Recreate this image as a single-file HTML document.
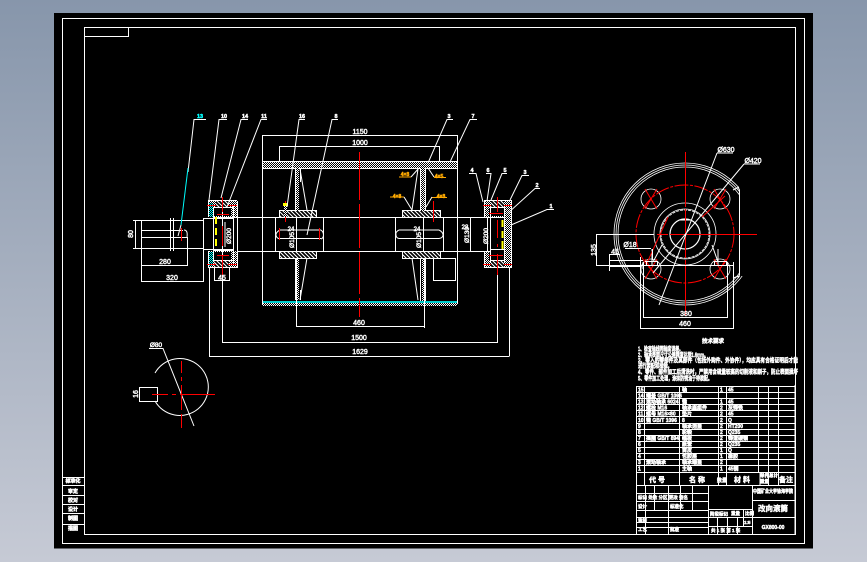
<!DOCTYPE html>
<html><head><meta charset="utf-8">
<style>
html,body{margin:0;padding:0;width:867px;height:562px;overflow:hidden;background:linear-gradient(#8796ab,#c6cad5)}
svg{position:absolute;left:0;top:0}
text{font-family:"Liberation Sans","Noto Sans CJK SC",sans-serif;fill:#fff;stroke:#fff;stroke-width:.45}
.l{fill:none;stroke:#fff;stroke-width:1}
.t{fill:none;stroke:#fff;stroke-width:.8}
.r{fill:none;stroke:#f00;stroke-width:1}
.c{fill:none;stroke:#0ff;stroke-width:1}
.y{fill:none;stroke:#ff0;stroke-width:2}
.o text{fill:#fa0;stroke:#fa0}
</style></head><body>
<svg width="867" height="562" viewBox="0 0 867 562">
<defs>
<pattern id="dots" width="2" height="2" patternUnits="userSpaceOnUse"><rect width="2" height="2" fill="#000"/><rect width="1" height="1" fill="#fff"/><rect x="1" y="1" width="1" height="1" fill="#fff"/></pattern>
<pattern id="hatch" width="4" height="4" patternUnits="userSpaceOnUse"><rect width="4" height="4" fill="#000"/><path d="M0 0L4 4M-1 3L1 5M3 -1L5 1" stroke="#fff" stroke-width="1.1"/></pattern>
<pattern id="cy" width="2" height="2" patternUnits="userSpaceOnUse"><rect width="2" height="2" fill="#000"/><rect width="1" height="1" fill="#0ff"/><rect x="1" y="1" width="1" height="1" fill="#0ff"/></pattern>
</defs>
<rect x="54" y="13" width="759" height="535.500" fill="#000"/>
<g shape-rendering="crispEdges">
<rect class="l" x="62.500" y="18.500" width="742" height="525"/>
<rect class="l" x="84.500" y="27.500" width="711" height="507"/>
<path class="l" d="M84 36.500H128.500V27"/>
<path class="l" d="M62 477.500H84M62 485.500H84M62 495.500H84M62 504.500H84M62 513.500H84M62 524.500H84"/>
</g>
<g font-size="5" font-weight="700" text-anchor="middle"><text x="73" y="482.500">标准化</text><text x="73" y="493">审定</text><text x="73" y="502">校对</text><text x="73" y="511">设计</text><text x="73" y="520">制图</text><text x="73" y="530">描图</text></g>

<!-- ===== main view ===== -->
<g shape-rendering="crispEdges">
<rect x="262" y="162" width="195" height="6" fill="url(#dots)"/>
<path class="l" d="M262 161.500H457M262 168.500H457"/>
<rect x="262" y="301" width="195" height="2" fill="#0cc"/>
<rect x="262" y="303" width="195" height="3" fill="url(#dots)"/>
<path class="l" d="M262.500 135V304M457.500 135V304M262 135.500H457M279.500 146V161M439.500 146V161M279 146.500H439"/>
<path class="l" d="M233 217.500H490M233 251.500H490M275.500 217V251M323.500 217V251M296.500 217V251M395.500 217V251M443.500 217V251M423.500 217V251M470.500 217V251"/>
<rect x="279" y="210" width="38" height="7" fill="url(#hatch)"/>
<rect x="279" y="252" width="38" height="7" fill="url(#hatch)"/>
<rect x="402" y="211" width="39" height="6" fill="url(#hatch)"/>
<rect x="402" y="252" width="39" height="7" fill="url(#hatch)"/>
<path class="l" d="M279.500 210V217M316.500 210V217M279 210.500H317M279.500 251V259M316.500 251V259M279 258.500H317M402.500 211V217M440.500 211V217M402 210.500H441M402.500 251V258M440.500 251V258M402 258.500H441"/>
<rect x="296" y="168" width="3" height="43" fill="url(#dots)"/>
<rect x="296" y="259" width="3" height="41" fill="url(#dots)"/>
<rect x="421" y="168" width="4" height="43" fill="url(#dots)"/>
<rect x="422" y="259" width="3" height="42" fill="url(#dots)"/>
<path class="l" d="M295.500 168V211M300.500 168V182M295.500 258V300M300.500 290V300M420.500 168V211M425.500 168V211M420.500 258V301M425.500 258V301"/>
<rect class="l" x="433.500" y="258.500" width="22" height="22"/>
<path class="l" d="M203.500 218.500H233M203.500 249.500H233M203.500 218V249M133 220.500H203M133 248.500H203M141.500 220V282M135.500 220V248M170.500 218V251M173.500 218V251M141 230.500H183M141 237.500H187M187.500 237V265M142 265.500H188M142 281.500H204M203.500 249V281"/>
<path class="l" d="M296.500 259V326.500H424M424.500 259V328M222 342.500H497.500M222.500 268V342.500M497.500 268V343M209 356.500H509.500M209.500 268V356M509.500 268V356"/>
<path class="l" d="M214.500 268V280M229.500 268V280M214 280.500H230"/>
</g>
<path class="l" d="M184 230Q188 230 187 237"/>
<path class="l" d="M280 230Q276 232 276 235Q276 238 280 239M279 230H321M279 238.500H321M321 230Q323.500 232 323.500 235Q323.500 238 321 239"/>
<path class="l" d="M399 230Q395 232 396 235Q396 238 399 238.500M399 230H439M399 238.500H439M439 230Q443 232 443 235Q443 238 439 238.500"/>
<path class="l" d="M300 169L307 210M307 258L300 300M418 169L412 210M412 258L418 300"/>
<g shape-rendering="crispEdges">
<rect x="209" y="201" width="28" height="16" fill="url(#dots)"/>
<rect x="209" y="251" width="28" height="17" fill="url(#dots)"/>
<rect x="216" y="201" width="13" height="6" fill="url(#hatch)"/>
<rect x="214" y="261" width="15" height="6" fill="url(#hatch)"/>
<rect x="209" y="203" width="4" height="14" fill="url(#cy)"/>
<rect x="209" y="252" width="4" height="14" fill="url(#cy)"/>
<rect x="213" y="208" width="18" height="8" fill="#000"/>
<rect x="213" y="252" width="18" height="8" fill="#000"/>
<path class="l" d="M208.500 201V217M208.500 251V268M233.500 205V264M237.500 201V268M208 200.500H237M208 267.500H237M213.500 207V262M222.500 207V262M213 217.500H234M213 250.500H234M225 222V247M213 207.500H234M213 260.500H234"/>
<path class="y" d="M216 217V224M216 228V235M216 239V246"/>
<path class="r" d="M222.500 197V212M222.500 226V246M222.500 255V275M207 205.500H216M228 205.500H237M207 264.500H216M228 264.500H237M217 214.500H229M217 255.500H229"/>
<rect x="484" y="201" width="28" height="16" fill="url(#dots)"/>
<rect x="484" y="252" width="28" height="16" fill="url(#dots)"/>
<rect x="491" y="201" width="13" height="6" fill="url(#hatch)"/>
<rect x="491" y="261" width="13" height="6" fill="url(#hatch)"/>
<rect x="489" y="208" width="16" height="8" fill="#000"/>
<rect x="489" y="252" width="16" height="8" fill="#000"/>
<rect x="504" y="217" width="8" height="35" fill="url(#dots)"/>
<path class="l" d="M484.500 201V217M484.500 252V268M511.500 201V268M484 200.500H512M484 267.500H512M490.500 207V262M504.500 207V262M490 207.500H505M490 260.500H505M490 217.500H504M490 249.500H504M487.500 217V252"/>
<path class="y" d="M502.500 220V227M502.500 231V238M502.500 241V249"/>
<path class="r" d="M497.500 197V212M497.500 220V238M497.500 244V247M497.500 254V275M483 205.500H491M504 205.500H512M483 264.500H491M504 264.500H512M489 213.500H503M489 255.500H503"/>
<path class="r" d="M359.500 152V200M359.500 204V248M359.500 252V294M359.500 298V317M285.500 201V222M433.500 201V222M279.500 228V240M319.500 228V240M181.500 228V241"/>
<rect x="283" y="203" width="5" height="3" fill="#ff0"/>
<rect x="284" y="206" width="3" height="11" fill="url(#dots)"/>
</g>
<!-- leaders -->
<path class="l" d="M206 119.500H194L188 172M227 119.500H219L209 200M248 119.500H241L221 198M267 119.500H261L227 207M305 119.500H299L287 207M338 119.500H332L307 235"/>
<path class="c" d="M188 168L181 225"/>
<path class="l" d="M181 225L178 236"/>
<path class="l" d="M453 119.500H447L428 163M477 119.500H470L450 162M469 173.500H476L483 202M486 173.500H491L487 201M507 173.500H502L491 200M529 175.500H522L510 200M540 188.500H535L508 213M554 209.500H547L511 225"/>
<g font-size="5.500" font-weight="700" text-anchor="middle">
<text x="200" y="118" style="fill:#0ff;stroke:#0ff">13</text><text x="224" y="118">10</text><text x="245" y="118">14</text><text x="264" y="118">11</text><text x="302" y="118">16</text><text x="336" y="118">8</text>
<text x="449" y="118">3</text><text x="473" y="118">7</text><text x="472" y="172">4</text><text x="488" y="172">6</text><text x="505" y="172">5</text><text x="525" y="174">3</text><text x="537" y="187">2</text><text x="551" y="208">1</text>
</g>
<g font-size="7" text-anchor="middle">
<text x="360" y="134">1150</text><text x="360" y="145">1000</text><text x="359" y="325">460</text><text x="359" y="340">1500</text><text x="360" y="354">1629</text>
<text x="165" y="264">280</text><text x="172" y="280">320</text><text x="222" y="280">45</text>
<text transform="translate(133,234) rotate(-90)">80</text>
</g>
<g font-size="6.500" text-anchor="middle">
<text transform="translate(294,240) rotate(-90)">Ø105</text>
<text transform="translate(421,240) rotate(-90)">Ø105</text>
<text transform="translate(231,236) rotate(-90)">Ø200</text>
<text transform="translate(488,236) rotate(-90)">Ø200</text>
<text transform="translate(469,235) rotate(-90)">Ø130</text>
<text x="291" y="231" font-size="6">24</text><text x="417" y="231" font-size="6">24</text><text x="465" y="229" font-size="6">28</text>
</g>
<g font-size="5" font-weight="700" class="o" text-anchor="middle">
<text x="405" y="176">4×8</text><text x="439" y="178">4×5</text><text x="397" y="198">4×8</text><text x="441" y="198">4×8</text>
</g>
<path d="M399 177H411M434 177.500H446M390 197H404M432 197.500H447" stroke="#fa0" fill="none"/>
<path class="l" d="M411 177L419 168M434 177L428 168M404 197L412 210M432 197L426 207"/>

<!-- ===== shaft section ===== -->
<path class="l" d="M155 373A28.500 28.500 0 1 1 155 401"/>
<path class="l" d="M139 387.500H157.500V401.500H139M139.500 387V402" shape-rendering="crispEdges"/>
<path class="l" d="M149 348.500H163L194 426"/>
<path class="r" d="M152 394.500H168M172 394.500H176M180 394.500H215M181.500 361V373M181.500 377V381M181.500 385V410M181.500 414V428" shape-rendering="crispEdges"/>
<text x="156" y="347" font-size="6.500" text-anchor="middle">Ø80</text>
<text transform="translate(138,394) rotate(-90)" font-size="7" text-anchor="middle">16</text>

<!-- ===== side view ===== -->
<g>
<clipPath id="cut"><path d="M600 150H739V276H760V320H600Z"/></clipPath>
<g clip-path="url(#cut)">
<circle class="t" cx="685" cy="234" r="71"/><circle class="t" cx="685" cy="234" r="69"/><circle class="t" cx="685" cy="234" r="67"/>
</g>
<path class="l" d="M738 187L739.500 190V275L738 278M733 190L739 187M733 278L739 276"/>
<circle class="t" cx="651" cy="199" r="10"/><circle class="t" cx="720" cy="199" r="10"/><circle class="t" cx="651" cy="269" r="10"/><circle class="t" cx="720" cy="269" r="10"/>
<circle class="t" cx="685" cy="234" r="31"/><circle class="t" cx="685" cy="234" r="24" stroke-dasharray="3 1"/><circle class="t" cx="685" cy="234" r="25"/>
<circle cx="685" cy="234" r="15" fill="none" stroke="#fff" stroke-width="1.200"/>
<path class="l" d="M679 220H691M652 249V265M653 262L662 245M718 262L712 245M718 249V265"/>
<circle class="r" cx="685" cy="234" r="49" stroke-dasharray="14 1.500 3 1.500"/>
<path class="r" d="M645 189L657 209M645 209L657 189M714 209L726 189M714 189L726 209M645 279L657 259M645 259L657 279M714 259L726 279M714 279L726 259M668 217L646 265M702 217L725 196" stroke-width=".9"/>
<path d="M657 234.500H668M670 234.500H757M685.500 152V207M685.500 209V258M685.500 260V316" stroke="#f00" fill="none" shape-rendering="crispEdges"/>
<path class="l" d="M717 153H733M717 153L659 305M744 164H760M744 164L653 273"/>
<g shape-rendering="crispEdges">
<path class="l" d="M640 265.500H733M645 261.500H658M714 261.500H727M646.500 261V265M657.500 261V265M714.500 261V265M726.500 261V265"/>
<path class="l" d="M640.500 257V329M733.500 262V329M643.500 262V317.500M727.500 262V317.500M640 328.500H734M643 317.500H728M596 234.500H654M596 265.500H640M596.500 234V266"/>
<path class="l" d="M609 254.500H620M609 260.500H643M609 266.500H640M609.500 254V271M625 248.500H651M652.500 249V260M643 262V269"/>
</g>
<g font-size="7" text-anchor="middle">
<text x="726" y="152">Ø630</text><text x="753" y="163">Ø420</text>
<text x="686" y="316">380</text><text x="685" y="326">460</text>
<text x="630" y="247">Ø18</text><text x="615" y="254">45</text>
<text transform="translate(596,250) rotate(-90)">135</text>
</g>
</g>

<!-- ===== notes ===== -->
<g font-size="6" font-weight="700" lengthAdjust="spacingAndGlyphs">
<text x="713" y="343" font-size="5.500" text-anchor="middle">技术要求</text>
<text x="638" y="351" textLength="45" lengthAdjust="spacingAndGlyphs">1、检查轴线同轴度误差。</text>
<text x="638" y="357" textLength="70" lengthAdjust="spacingAndGlyphs">2、轴承表面尺寸公差精度达到1.6mm。</text>
<text x="638" y="362.500" textLength="160" lengthAdjust="spacingAndGlyphs">3、零入的零部件及其部件（包括外购件、外协件），均应具有合格证明后才能</text>
<text x="638" y="368" textLength="34" lengthAdjust="spacingAndGlyphs">进行装配和检验。</text>
<text x="638" y="374" textLength="160" lengthAdjust="spacingAndGlyphs">4、零件、部件加工后清洗时，严禁用含硫量较高的切削液和刷子，防止表面损坏</text>
<text x="638" y="380.500" textLength="74" lengthAdjust="spacingAndGlyphs">5、零件加工处理，涂抹防锈油于待装配。</text>
</g>

<!-- ===== title block ===== -->
<g shape-rendering="crispEdges">
<path class="l" d="M636.500 387V534M795 385V534"/>
<path class="l" d="M636 386.500H795M636 392.500H795M636 398.500H795M636 404.500H795M636 410.500H795M636 416.500H795M636 423.500H795M636 429.500H795M636 435.500H795M636 441.500H795M636 447.500H795M636 453.500H795M636 459.500H795M636 465.500H795M636 472.500H795M636 485.500H795"/>
<path class="l" d="M644.500 387V485M679.500 387V485M718.500 387V485M726.500 387V485M758.500 387V472M768.500 387V485M778.500 387V485"/>
<path class="l" d="M645.500 485V534M654.500 485V510M668.500 485V534M680.500 485V510M692.500 485V510M708.500 485V534M752.500 485V534"/>
<path class="l" d="M636 493.500H708M636 501.500H708M636 510.500H708M636 517.500H708M636 522.500H708M636 527.500H708M708 509.500H752M708 517.500H795M708 526.500H752M752 500.500H795M760 472V485"/>
<path class="l" d="M717.500 517V534M727.500 517V534M737.500 517V534M743.500 510V526"/>
</g>
<g font-size="5" font-weight="700">
<text x="638" y="391.500">15</text><text x="682" y="391.500">轴</text><text x="720" y="391.500">1</text><text x="728" y="391.500">45</text>
<text x="638" y="397.500">14</text><text x="646" y="397.500">端盖 GB/T 1096</text>
<text x="638" y="403.500">13</text><text x="646" y="403.500">滚动轴承 6024</text><text x="682" y="403.500">键</text><text x="720" y="403.500">1</text><text x="728" y="403.500">45</text>
<text x="638" y="409.500">12</text><text x="646" y="409.500">螺栓 M16</text><text x="682" y="409.500">轴承座组件</text><text x="720" y="409.500">2</text><text x="728" y="409.500">灰铸铁</text>
<text x="638" y="415.500">11</text><text x="646" y="415.500">螺母 M16×80</text><text x="682" y="415.500">垫片</text><text x="720" y="415.500">2</text><text x="728" y="415.500">45</text>
<text x="638" y="422">10</text><text x="646" y="422">键 GB/T 1096</text><text x="682" y="422">8</text><text x="720" y="422">2</text><text x="728" y="422">Q</text>
<text x="638" y="428">9</text><text x="682" y="428">轴承透盖</text><text x="720" y="428">2</text><text x="728" y="428">HT200</text>
<text x="638" y="434">8</text><text x="682" y="434">轮毂</text><text x="720" y="434">2</text><text x="728" y="434">Q235</text>
<text x="638" y="440">7</text><text x="646" y="440">挡圈 GB/T 894</text><text x="682" y="440">幅板</text><text x="720" y="440">2</text><text x="728" y="440">铸造碳钢</text>
<text x="638" y="446">6</text><text x="682" y="446">胀套</text><text x="720" y="446">2</text><text x="728" y="446">Q235</text>
<text x="638" y="452">5</text><text x="682" y="452">筒皮</text><text x="720" y="452">1</text><text x="728" y="452">Q</text>
<text x="638" y="458">4</text><text x="682" y="458">包胶层</text><text x="720" y="458">1</text><text x="728" y="458">橡胶</text>
<text x="638" y="464">3</text><text x="646" y="464">滚动轴承</text><text x="682" y="464">轴承端盖</text><text x="720" y="464">2</text>
<text x="638" y="470.500">1</text><text x="682" y="470.500">主轴</text><text x="720" y="470.500">1</text><text x="728" y="470.500">45钢</text>
</g>
<g font-size="7" font-weight="700" text-anchor="middle">
<text x="657" y="482">代 号</text><text x="697" y="482">名 称</text><text x="722" y="482" font-size="5">数量</text><text x="742" y="482">材 料</text><text x="786" y="482">备注</text>
</g>
<g font-size="4.500" font-weight="700">
<text x="760" y="477">单件</text><text x="769" y="477">总计</text><text x="760" y="483">重量</text>
<text x="753" y="493" font-size="5" textLength="40" lengthAdjust="spacingAndGlyphs">中国矿业大学徐海学院</text>
<text x="638" y="499">标记 处数 分区 更改 签名</text>
<text x="638" y="508">设计</text><text x="670" y="508">标准化</text>
<text x="638" y="522">审核</text><text x="638" y="531">工艺</text><text x="670" y="531">批准</text>
<text x="710" y="515.500">阶段标记</text><text x="731" y="515">重量</text><text x="745" y="515">比例</text>
<text x="744" y="524">1:5</text><text x="711" y="532">共 1 张 第 1 张</text>
</g>
<text x="773" y="511" font-size="7.500" font-weight="700" text-anchor="middle">改向滚筒</text>
<text x="773" y="529" font-size="5" font-weight="700" text-anchor="middle">GX800-00</text>
</svg>
</body></html>
